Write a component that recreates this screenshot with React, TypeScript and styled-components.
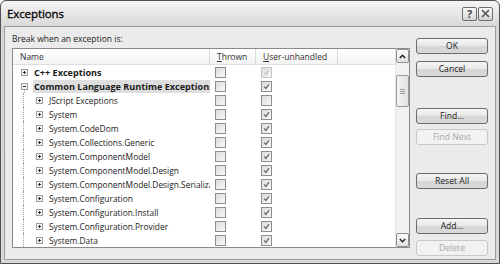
import React from "react";
import styled, { createGlobalStyle } from "styled-components";

const Global = createGlobalStyle`
  html, body { margin: 0; padding: 0; background: #ffffff; }
  body { font-family: "Open Sans", "DejaVu Sans", sans-serif; }
`;

const Win = styled.div`
  width: 500px;
  height: 264px;
  box-sizing: border-box;
  border: 1px solid #505050;
  border-radius: 6px 6px 0 0;
  background: linear-gradient(#f4f4f4, #d8d8d8 26px, #d9d9d9);
  padding: 0 3px 3px 3px;
  display: flex;
  flex-direction: column;
  overflow: hidden;
`;

const TitleBar = styled.div`
  height: 25px;
  display: flex;
  align-items: center;
  padding-left: 3px;
  flex-shrink: 0;
`;

const Title = styled.div`
  font-family: "Open Sans", sans-serif;
  font-weight: 400;
  font-size: 11.5px;
  color: #000;
  flex: 1;
  letter-spacing: -0.1px;
  -webkit-text-stroke: 0.3px #000;
`;

const CapBtn = styled.div<{ $close?: boolean }>`
  width: 15px;
  height: 14px;
  box-sizing: border-box;
  border: 1px solid #6e6e6e;
  border-radius: 2px;
  background: linear-gradient(#fafafa, #d4d4d4);
  display: flex;
  align-items: center;
  justify-content: center;
  margin-left: 1px;
  margin-right: ${(p) => (p.$close ? "3px" : "0")};
  font-weight: 700;
  font-size: 11px;
  color: #444;
`;

const Client = styled.div`
  flex: 1;
  border: 1px solid #9c9c9c;
  background: #ebebeb;
  display: flex;
  padding: 5px 0 0 7px;
  gap: 6px;
`;

const LeftCol = styled.div`
  width: 398px;
  display: flex;
  flex-direction: column;
`;

const Label = styled.div`
  font-size: 8.5px;
  line-height: 14px;
  height: 14px;
  color: #222;
  margin-bottom: 2px;
`;

const ListBox = styled.div`
  height: 200px;
  box-sizing: border-box;
  border: 1px solid #8a8a8a;
  background: #fff;
  display: flex;
  overflow: hidden;
`;

const ListMain = styled.div`
  flex: 1;
  display: flex;
  flex-direction: column;
  overflow: hidden;
`;

const Header = styled.div`
  height: 16px;
  flex-shrink: 0;
  display: flex;
  background: linear-gradient(#ffffff, #f3f3f3);
  border-bottom: 1px solid #dedede;
  box-sizing: border-box;
`;

const HeadCell = styled.div<{ $w?: number }>`
  ${(p) => (p.$w ? `width: ${p.$w}px;` : "flex: 1;")}
  flex-shrink: 0;
  box-sizing: border-box;
  border-right: ${(p) => (p.$w ? "1px solid #d8d8d8" : "none")};
  font-size: 8.5px;
  line-height: 15px;
  color: #333;
  padding-left: 7px;
  white-space: nowrap;
`;

const U = styled.span`
  text-decoration: underline;
  text-underline-offset: 1px;
`;

const Rows = styled.div`
  flex: 1;
  overflow: hidden;
`;

const Row = styled.div`
  height: 14px;
  display: flex;
  align-items: center;
  position: relative;
`;

const NameCell = styled.div<{ $indent: number }>`
  width: 197px;
  flex-shrink: 0;
  display: flex;
  align-items: center;
  padding-left: ${(p) => p.$indent}px;
  box-sizing: border-box;
  overflow: hidden;
  white-space: nowrap;
  height: 14px;
  position: relative;
`;

const NameText = styled.span<{ $bold?: boolean; $sel?: boolean }>`
  font-size: ${(p) => (p.$bold ? 9.1 : 8.4)}px;
  font-weight: ${(p) => (p.$bold ? 700 : 400)};
  color: #1a1a1a;
  line-height: 13px;
  padding: 0 1px;
  margin-left: 5px;
  background: ${(p) => (p.$sel ? "#dedede" : "transparent")};
  flex: ${(p) => (p.$sel ? 1 : "none")};
  overflow: hidden;
`;

const CheckCell = styled.div<{ $w: number }>`
  width: ${(p) => p.$w}px;
  flex-shrink: 0;
  padding-left: 5px;
  box-sizing: border-box;
  display: flex;
  align-items: center;
`;

const Box = styled.div<{ $dim?: boolean }>`
  width: 11px;
  height: 11px;
  box-sizing: border-box;
  border: 1px solid ${(p) => (p.$dim ? "#c4c4c4" : "#8d8d8d")};
  background: linear-gradient(135deg, #dcdcdc, #f8f8f8);
  display: flex;
  align-items: center;
  justify-content: center;
`;

const VLine = styled.div<{ $x: number; $top?: number }>`
  position: absolute;
  left: ${(p) => p.$x}px;
  top: ${(p) => p.$top ?? 0}px;
  bottom: 0;
  border-left: 1px dotted #a0a0a0;
`;

const Scroll = styled.div`
  width: 13px;
  flex-shrink: 0;
  display: flex;
  flex-direction: column;
  background: #f1f1f1;
  border-left: 1px solid #e4e4e4;
`;

const ArrowBtn = styled.div`
  height: 14px;
  flex-shrink: 0;
  box-sizing: border-box;
  border: 1px solid #8f8f8f;
  border-radius: 2px;
  background: linear-gradient(#fbfbfb, #e0e0e0);
  display: flex;
  align-items: center;
  justify-content: center;
`;

const Track = styled.div`
  flex: 1;
  padding-top: 12px;
`;

const Thumb = styled.div`
  height: 32px;
  box-sizing: border-box;
  border: 1px solid #9a9a9a;
  border-radius: 2px;
  background: linear-gradient(90deg, #f4f4f4, #e2e2e2);
  display: flex;
  flex-direction: column;
  align-items: center;
  justify-content: center;
  gap: 1px;
`;

const Grip = styled.div`
  width: 5px;
  height: 1px;
  background: #9a9a9a;
`;

const RightCol = styled.div`
  width: 72px;
  display: flex;
  flex-direction: column;
  padding-top: 1px;
`;

const Btn = styled.div<{ $mt: number; $disabled?: boolean }>`
  margin-top: ${(p) => p.$mt}px;
  height: 16px;
  box-sizing: border-box;
  border: 1px solid ${(p) => (p.$disabled ? "#c8c8c8" : "#6c6c6c")};
  border-radius: 3px;
  background: ${(p) =>
    p.$disabled ? "#f2f2f2" : "linear-gradient(#f6f6f6, #e6e6e6 50%, #d6d6d6 51%, #d9d9d9)"};
  color: ${(p) => (p.$disabled ? "#a8a8a8" : "#1a1a1a")};
  font-size: 8.6px;
  display: flex;
  align-items: center;
  justify-content: center;
`;

const Check = ({ dim }: { dim?: boolean }) => (
  <svg width="7" height="7" viewBox="0 0 7 7">
    <path d="M1 3.5 L3 5.5 L6 1.2" fill="none" stroke={dim ? "#c6c6c6" : "#707070"} strokeWidth="1.4" />
  </svg>
);

const Expander = ({ open }: { open?: boolean }) => (
  <svg width="7" height="7" viewBox="0 0 7 7" style={{ flexShrink: 0, position: "relative", zIndex: 1 }}>
    <rect x="0.5" y="0.5" width="6" height="6" fill="#f4f4f4" stroke="#9c9c9c" />
    <path d="M2 3.5 H5" stroke="#333" strokeWidth="1" />
    {!open && <path d="M3.5 2 V5" stroke="#333" strokeWidth="1" />}
  </svg>
);

type RowData = {
  name: string;
  level: 0 | 1;
  open?: boolean;
  sel?: boolean;
  thrown: boolean;
  user: "on" | "off" | "dim";
};

const rows: RowData[] = [
  { name: "C++ Exceptions", level: 0, thrown: false, user: "dim" },
  { name: "Common Language Runtime Exceptions", level: 0, open: true, sel: true, thrown: false, user: "on" },
  { name: "JScript Exceptions", level: 1, thrown: false, user: "off" },
  { name: "System", level: 1, thrown: false, user: "on" },
  { name: "System.CodeDom", level: 1, thrown: false, user: "on" },
  { name: "System.Collections.Generic", level: 1, thrown: false, user: "on" },
  { name: "System.ComponentModel", level: 1, thrown: false, user: "on" },
  { name: "System.ComponentModel.Design", level: 1, thrown: false, user: "on" },
  { name: "System.ComponentModel.Design.Serialization", level: 1, thrown: false, user: "on" },
  { name: "System.Configuration", level: 1, thrown: false, user: "on" },
  { name: "System.Configuration.Install", level: 1, thrown: false, user: "on" },
  { name: "System.Configuration.Provider", level: 1, thrown: false, user: "on" },
  { name: "System.Data", level: 1, thrown: false, user: "on" },
  { name: "System.Data.Common", level: 1, thrown: false, user: "on" },
];

export default function App() {
  return (
    <>
      <Global />
      <Win>
        <TitleBar>
          <Title>Exceptions</Title>
          <CapBtn>?</CapBtn>
          <CapBtn $close>
            <svg width="9" height="9" viewBox="0 0 9 9">
              <path d="M1 1 L8 8 M8 1 L1 8" stroke="#555" strokeWidth="1.6" />
            </svg>
          </CapBtn>
        </TitleBar>
        <Client>
          <LeftCol>
            <Label>Break when an exception is:</Label>
            <ListBox>
              <ListMain>
                <Header>
                  <HeadCell $w={197}>Name</HeadCell>
                  <HeadCell $w={46}>
                    <U>T</U>hrown
                  </HeadCell>
                  <HeadCell $w={82}>
                    <U>U</U>ser-unhandled
                  </HeadCell>
                  <HeadCell />
                </Header>
                <Rows>
                  {rows.map((r, i) => (
                    <Row key={i}>
                      <NameCell $indent={r.level === 0 ? 8 : 23}>
                        {r.level === 1 && <VLine $x={10} />}
                        {r.open && <VLine $x={11} $top={10} />}
                        <Expander open={r.open} />
                        <NameText $bold={r.level === 0} $sel={r.sel}>
                          {r.name}
                        </NameText>
                      </NameCell>
                      <CheckCell $w={46}>
                        <Box>{r.thrown && <Check />}</Box>
                      </CheckCell>
                      <CheckCell $w={82}>
                        <Box $dim={r.user === "dim"}>
                          {r.user !== "off" && <Check dim={r.user === "dim"} />}
                        </Box>
                      </CheckCell>
                    </Row>
                  ))}
                </Rows>
              </ListMain>
              <Scroll>
                <ArrowBtn>
                  <svg width="7" height="5" viewBox="0 0 7 5">
                    <path d="M0.8 4 L3.5 1.3 L6.2 4" fill="none" stroke="#222" strokeWidth="1.5" />
                  </svg>
                </ArrowBtn>
                <Track>
                  <Thumb>
                    <Grip />
                    <Grip />
                    <Grip />
                  </Thumb>
                </Track>
                <ArrowBtn>
                  <svg width="7" height="5" viewBox="0 0 7 5">
                    <path d="M0.8 1 L3.5 3.7 L6.2 1" fill="none" stroke="#222" strokeWidth="1.5" />
                  </svg>
                </ArrowBtn>
              </Scroll>
            </ListBox>
          </LeftCol>
          <RightCol>
            <Btn $mt={5}>OK</Btn>
            <Btn $mt={7}>Cancel</Btn>
            <Btn $mt={31}>Find...</Btn>
            <Btn $mt={5} $disabled>
              Find Next
            </Btn>
            <Btn $mt={28}>Reset All</Btn>
            <Btn $mt={29}>Add...</Btn>
            <Btn $mt={6} $disabled>
              Delete
            </Btn>
          </RightCol>
        </Client>
      </Win>
    </>
  );
}
